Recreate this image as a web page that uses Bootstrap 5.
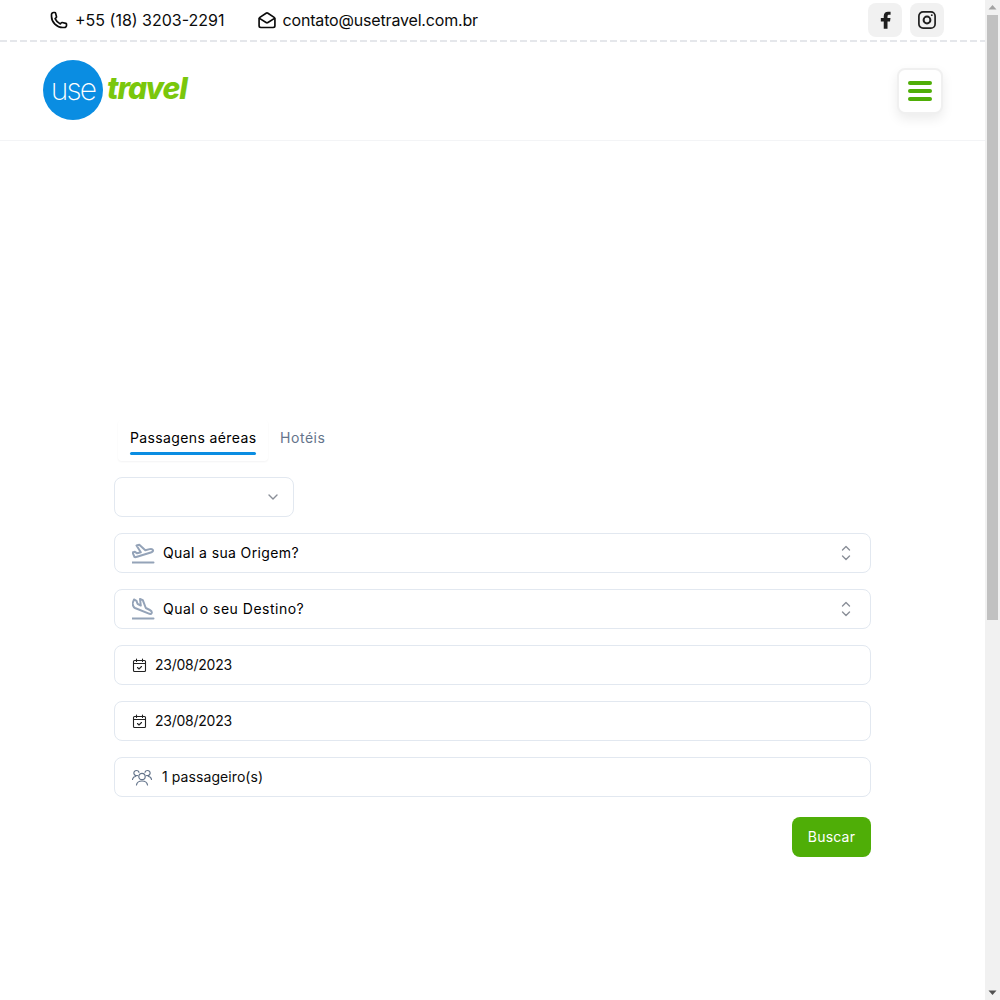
<!DOCTYPE html>
<html lang="pt-BR">
<head>
  <meta charset="UTF-8" />
  <title>Use Travel</title>
  <link href="https://cdn.jsdelivr.net/npm/bootstrap@5.3.3/dist/css/bootstrap.min.css" rel="stylesheet">
  <style>
    html, body { height: 100%; overflow: hidden; }
    body { font-family: Inter, "Liberation Sans", sans-serif; color: #0b0b0b; background: #fff; }
    a { color: inherit; text-decoration: none; }
    .page-view { min-width: 0; overflow: hidden; }
    .fake-scroll { width: 15px; background: #f1f1f1; }
    .fake-arrow { height: 15px; }
    .fake-thumb { width: 11px; height: 605px; margin-left: 2px; background: #c1c1c1; }
    .topbar { height: 42px; padding: 0 41px 2px 49px; background: repeating-linear-gradient(90deg, #e5e7eb 0 7px, transparent 7px 10px) left bottom / 100% 2px no-repeat; }
    .topbar-link { font-size: 16px; line-height: 24px; gap: 5px; margin-right: 32px; font-weight: 400; }
    .topbar-link svg { width: 20px; height: 20px; margin-right: 1px; }
    .email-text { letter-spacing: -.17px; }
    .social-btn { width: 34px; height: 34px; background: #f1f1f1; border-radius: 8px; color: #1f1f1f; }
    .site-header { height: 99px; border-bottom: 1px solid #f3f4f6; padding: 0 42px 2px 43px; }
    .logo-circle { width: 60px; height: 60px; border-radius: 50%; background: #0a8de2; color: #fff; font-size: 30px; font-weight: 200; letter-spacing: -1.8px; line-height: 1; padding-bottom: 3px; }
    .logo-word { color: #7ac70c; font-size: 30px; font-weight: 800; font-style: italic; letter-spacing: -1.1px; margin-left: 4px; margin-top: -4px; }
    .menu-btn { width: 46px; height: 46px; margin-top: 1px; padding: 0; background: #fff; border: 2px solid #f0f0f0; border-radius: 8px; box-shadow: 0 5px 12px rgba(0,0,0,.08); gap: 4px; }
    .menu-btn span { display: block; width: 24px; height: 4px; border-radius: 2px; background: #4fae07; }
    .search-wrap { width: 757px; margin: 279px 0 0 114px; }
    .tab-row { padding-left: 4px; height: 41px; }
    .tab-active { width: 150px; padding: 0 12px; border-radius: 4px; box-shadow: 0 1px 2px rgba(15,23,42,.05); }
    .tab-text { font-size: 14px; font-weight: 400; letter-spacing: .38px; line-height: 20px; padding-top: 8px; white-space: nowrap; color: #000; }
    .tab-line { height: 3px; width: 126px; background: #0a8de2; border-radius: 2px; margin-top: 4px; }
    .tab-text.tab-other { color: #64748b; margin-left: 12px; letter-spacing: .55px; }
    .field { height: 40px; border: 1px solid #e2e8f0; border-radius: 8px; padding: 0 19px 0 17px; font-size: 14px; line-height: 20px; background: #fff; margin-bottom: 16px; }
    .field-strong { font-weight: 400; letter-spacing: .5px; color: #000; }
    .field-origin { letter-spacing: .38px; }
    .field-date { letter-spacing: -.25px; }
    .field-count { letter-spacing: .08px; }
    .field-lang { width: 180px; margin-top: 16px; padding-right: 13px; }
    .field svg { flex-shrink: 0; }
    .buscar-btn { width: 79px; height: 40px; margin-top: 4px; padding: 0 0 1px; background: #4fae07; border: 0; border-radius: 8px; color: #fff; font-size: 14px; font-weight: 400; letter-spacing: .2px; }
    .buscar-btn:hover { background: #479c06; color: #fff; }
    .ico-muted { color: #94a3b8; }
  </style>
</head>
<body class="d-flex">
  <div class="page-view flex-grow-1">
    <div class="topbar d-flex align-items-center">
      <a href="#" class="topbar-link d-flex align-items-center">
        <svg viewBox="0 0 24 24" fill="none" stroke="currentColor" stroke-width="2" stroke-linecap="round" stroke-linejoin="round"><path d="M3 5.500A2.500 2.500 0 0 1 5.500 3h1.400a1 1 0 0 1 1 .76l1.100 4.400a1 1 0 0 1-.37 1.040L7.300 10.400a12 12 0 0 0 6.300 6.300l1.200-1.330a1 1 0 0 1 1.040-.37l4.400 1.100a1 1 0 0 1 .76 1v1.400a2.500 2.500 0 0 1-2.500 2.500h-2C9.300 21 3 14.700 3 7.500z"/></svg>
        <span>+55 (18) 3203-2291</span>
      </a>
      <a href="#" class="topbar-link d-flex align-items-center">
        <svg viewBox="0 0 24 24" fill="none" stroke="currentColor" stroke-width="2" stroke-linecap="round" stroke-linejoin="round"><path d="M2.500 10.500V19a2 2 0 0 0 2 2h15a2 2 0 0 0 2-2v-8.500a2 2 0 0 0-.9-1.670l-7.500-5a2 2 0 0 0-2.200 0l-7.500 5a2 2 0 0 0-.9 1.670z"/><path d="M3 10l7.900 5a2 2 0 0 0 2.200 0L21 10"/></svg>
        <span class="email-text">contato@usetravel.com.br</span>
      </a>
      <div class="ms-auto d-flex gap-2">
        <a href="#" class="social-btn d-flex align-items-center justify-content-center">
          <svg width="20" height="20" viewBox="0 0 24 24" fill="currentColor"><path d="M15 22.500v-8.800h3l.6-4h-3.600V7.700c0-1.100.5-1.900 2-1.900h1.700V2.200C18.200 2.100 16.900 2 15.600 2c-3 0-5.100 1.800-5.100 5.100v2.600H7v4h3.500v8.800z"/></svg>
        </a>
        <a href="#" class="social-btn d-flex align-items-center justify-content-center">
          <svg width="20" height="20" viewBox="0 0 20 20" fill="none" stroke="currentColor" stroke-width="1.700"><rect x="1.900" y="1.900" width="16.200" height="16.200" rx="4.200"/><circle cx="10" cy="10" r="3.400" stroke-width="2"/><circle cx="14.800" cy="5.200" r=".9" fill="currentColor" stroke="none"/></svg>
        </a>
      </div>
    </div>

    <header class="site-header d-flex align-items-center justify-content-between">
      <a href="#" class="d-flex align-items-center">
        <span class="logo-circle d-flex align-items-center justify-content-center">use</span>
        <span class="logo-word">travel</span>
      </a>
      <button type="button" class="menu-btn btn d-flex flex-column align-items-center justify-content-center" aria-label="Menu">
        <span></span><span></span><span></span>
      </button>
    </header>

    <main class="search-wrap">
      <div class="tab-row d-flex">
        <div class="tab-active">
          <div class="tab-text">Passagens aéreas</div>
          <div class="tab-line"></div>
        </div>
        <div class="tab-text tab-other">Hotéis</div>
      </div>

      <form onsubmit="return false;">
        <div class="field field-lang d-flex align-items-center justify-content-end">
          <svg width="14" height="14" viewBox="0 0 14 14" fill="none" stroke="#8a8f98" stroke-width="1.400" stroke-linecap="round" stroke-linejoin="round"><path d="M3 5l4 4 4-4"/></svg>
        </div>

        <div class="field field-strong field-origin d-flex align-items-center">
          <svg class="ico-muted me-2" width="23" height="22" viewBox="1 0 23 22" fill="none" stroke="currentColor" stroke-width="2" stroke-linejoin="round" stroke-linecap="round"><path d="M1.500 20.500h21"/><path d="M3.500 15L1.500 10.500l2.500-.7 2.200 1.500 3.600-1L5.500 3.500l2.800-.8 6 5.600 4.300-1.200c1.300-.3 3 0 3.400 1 .3 1-.8 2-2.200 2.400L6 14.800c-1 .3-2 .6-2.500.2z"/></svg>
          <span>Qual a sua Origem?</span>
          <svg class="ms-auto" width="10" height="16" viewBox="0 0 10 16" fill="none" stroke="#8a8f98" stroke-width="1.400" stroke-linecap="round" stroke-linejoin="round"><path d="M1.500 5l3.500-3.500 3.500 3.500M1.500 11l3.500 3.500 3.500-3.500"/></svg>
        </div>

        <div class="field field-strong d-flex align-items-center">
          <svg class="ico-muted me-2" width="23" height="22" viewBox="1 0 23 22" fill="none" stroke="currentColor" stroke-width="2" stroke-linejoin="round" stroke-linecap="round"><path d="M1.500 20.500h21"/><path d="M1.500 5.500L3 1.500l2.500 1.300 1 3 3.300 1.700L9 1l2.800 1.200 3 7.800 4 2c1.200.6 2.300 2 1.800 3.200-.5.900-2 .8-3.300.2L4 10c-1-.5-2-1.500-2.500-4.500z"/></svg>
          <span>Qual o seu Destino?</span>
          <svg class="ms-auto" width="10" height="16" viewBox="0 0 10 16" fill="none" stroke="#8a8f98" stroke-width="1.400" stroke-linecap="round" stroke-linejoin="round"><path d="M1.500 5l3.500-3.500 3.500 3.500M1.500 11l3.500 3.500 3.500-3.500"/></svg>
        </div>

        <div class="field d-flex align-items-center">
          <svg class="me-2" width="15" height="15" viewBox="0 0 15 15" fill="none" stroke="#222" stroke-width="1.100" stroke-linecap="round" stroke-linejoin="round"><rect x="1.500" y="2.500" width="12" height="11" rx="1"/><path d="M1.500 5.500h12M4.500 1v2.500M10.500 1v2.500M5.500 9.500l1.500 1.500 2.500-2.500"/></svg>
          <span class="field-date">23/08/2023</span>
        </div>

        <div class="field d-flex align-items-center">
          <svg class="me-2" width="15" height="15" viewBox="0 0 15 15" fill="none" stroke="#222" stroke-width="1.100" stroke-linecap="round" stroke-linejoin="round"><rect x="1.500" y="2.500" width="12" height="11" rx="1"/><path d="M1.500 5.500h12M4.500 1v2.500M10.500 1v2.500M5.500 9.500l1.500 1.500 2.500-2.500"/></svg>
          <span class="field-date">23/08/2023</span>
        </div>

        <div class="field d-flex align-items-center">
          <svg class="me-2" width="22" height="18" viewBox="1 0 22 18" fill="none" stroke="#64748b" stroke-width="1.200" stroke-linecap="round" stroke-linejoin="round"><circle cx="11" cy="8.500" r="3.200"/><path d="M5.500 17c.4-2.600 2.600-4 5.500-4s5.100 1.400 5.500 4"/><path d="M6.500 7.500a2.600 2.600 0 1 1-1-5 2.600 2.600 0 0 1 2.500 1.800M1.500 11.500c.3-1.800 1.500-2.900 3-3M15.500 7.500a2.600 2.600 0 1 0 1-5 2.600 2.600 0 0 0-2.500 1.800M20.500 11.500c-.3-1.800-1-2.900-3-3"/></svg>
          <span class="field-count">1 passageiro(s)</span>
        </div>

        <div class="d-flex justify-content-end">
          <button type="submit" class="btn buscar-btn">Buscar</button>
        </div>
      </form>
    </main>
  </div>

  <div class="fake-scroll d-flex flex-column flex-shrink-0" aria-hidden="true">
    <svg class="fake-arrow" width="15" height="15" viewBox="0 0 15 15"><path d="M3.500 9.500h8l-4-4.500z" fill="#a3a3a3"/></svg>
    <div class="fake-thumb"></div>
    <svg class="fake-arrow mt-auto" width="15" height="15" viewBox="0 0 15 15"><path d="M3.500 5.500h8l-4 4.500z" fill="#505050"/></svg>
  </div>

  <script src="https://cdn.jsdelivr.net/npm/bootstrap@5.3.3/dist/js/bootstrap.bundle.min.js"></script>
</body>
</html>
